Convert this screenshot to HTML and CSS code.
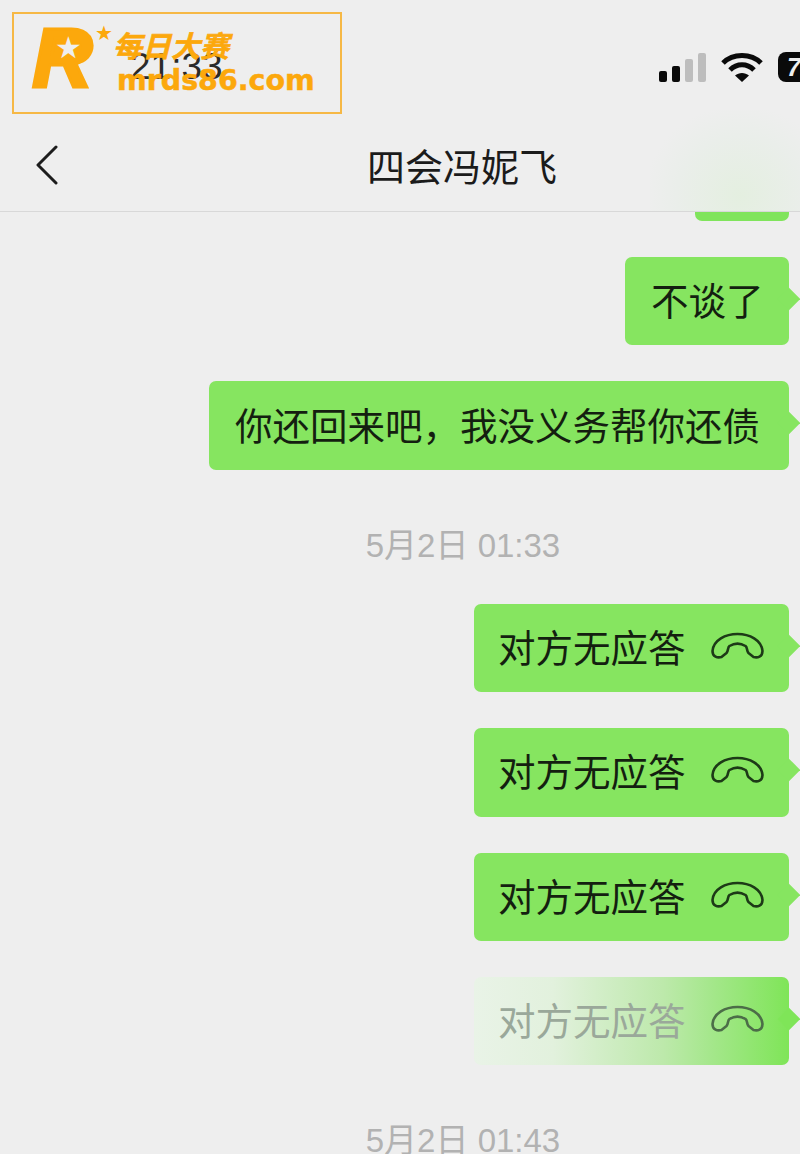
FILE: index.html
```html
<!DOCTYPE html>
<html>

<head>
    <title>chat</title>
    <link rel="stylesheet" href="styles.css">
</head>

<body>
    <div class="screen">
        <div class="status-bar">
            <span class="clock">21:33</span>
            <div class="status-icons">
                <div class="signal">
                    <i class="on s1"></i><i class="on s2"></i><i class="s3"></i><i class="s4"></i>
                </div>
                <svg class="wifi" viewBox="0 0 42 30">
                    <path d="M2 11C12 1 30 1 40 11" />
                    <path d="M9 18C16 11 26 11 33 18" />
                    <path class="wifi-dot" d="M14 23.5C18 20 24 20 28 23.5L21 30Z" />
                </svg>
                <div class="battery">7</div>
            </div>
        </div>

        <div class="nav">
            <svg class="back" viewBox="0 0 22 40">
                <path d="M20 2L2 20L20 38" />
            </svg>
            <div class="nav-title">四会冯妮飞</div>
        </div>

        <div class="chat">
            <div class="bubble bubble-cut"></div>
            <div class="bubble">不谈了</div>
            <div class="bubble bubble-long">你还回来吧，我没义务帮你还债</div>

            <div class="time">5月2日 01:33</div>

            <div class="bubble bubble-call">对方无应答
                <svg class="phone" viewBox="0 0 54 27">
                    <path d="M2 19C3 8 15 2 27 2C39 2 51 8 52 19C52 25 47 26 43 25L38 21C36 19 37 15 35 14C30 11 24 11 19 14C17 15 18 19 16 21L11 25C7 26 2 25 2 19Z" />
                </svg>
            </div>
            <div class="bubble bubble-call">对方无应答
                <svg class="phone" viewBox="0 0 54 27">
                    <path d="M2 19C3 8 15 2 27 2C39 2 51 8 52 19C52 25 47 26 43 25L38 21C36 19 37 15 35 14C30 11 24 11 19 14C17 15 18 19 16 21L11 25C7 26 2 25 2 19Z" />
                </svg>
            </div>
            <div class="bubble bubble-call">对方无应答
                <svg class="phone" viewBox="0 0 54 27">
                    <path d="M2 19C3 8 15 2 27 2C39 2 51 8 52 19C52 25 47 26 43 25L38 21C36 19 37 15 35 14C30 11 24 11 19 14C17 15 18 19 16 21L11 25C7 26 2 25 2 19Z" />
                </svg>
            </div>
            <div class="bubble bubble-call bubble-faded"><span class="faded-text">对方无应答</span>
                <svg class="phone" viewBox="0 0 54 27">
                    <path d="M2 19C3 8 15 2 27 2C39 2 51 8 52 19C52 25 47 26 43 25L38 21C36 19 37 15 35 14C30 11 24 11 19 14C17 15 18 19 16 21L11 25C7 26 2 25 2 19Z" />
                </svg>
            </div>

            <div class="time time-last">5月2日 01:43</div>
        </div>

        <div class="smudge"></div>

        <div class="watermark">
            <div class="logo">
                <span class="logo-fill"></span>
                <span class="logo-r">R</span>
                <span class="logo-inner-star">★</span>
                <span class="logo-star">★</span>
            </div>
            <div class="logo-text">
                <div class="logo-cn">每日大赛</div>
                <div class="logo-url">mrds86.com</div>
            </div>
        </div>
    </div>
</body>

</html>
```

FILE: styles.css
```css
html, body {
    margin: 0;
    padding: 0;
}

body {
    font-family: "Liberation Sans", "Noto Sans CJK SC", sans-serif;
    background-color: #eeeeee;
}

.screen {
    position: relative;
    width: 800px;
    height: 1154px;
    overflow: hidden;
    background-color: #eeeeee;
}

/* status bar */
.status-bar {
    box-sizing: border-box;
    height: 122px;
    padding: 12px 0 0 130px;
    display: flex;
    align-items: center;
    justify-content: space-between;
}

.clock {
    font-size: 37px;
    color: #2a2a2a;
}

.status-icons {
    display: flex;
    align-items: center;
    margin-right: -18px;
}

.signal {
    display: flex;
    align-items: flex-end;
    gap: 5px;
    height: 29px;
    margin-right: 15px;
}

.signal i {
    width: 8px;
    border-radius: 2px;
    background-color: #bdbdbd;
}

.signal i.on {
    background-color: #0a0a0a;
}

.s1 { height: 11px; }
.s2 { height: 16px; }
.s3 { height: 23px; }
.s4 { height: 29px; }

.wifi {
    width: 42px;
    height: 30px;
    margin-right: 15px;
}

.wifi path {
    fill: none;
    stroke: #0a0a0a;
    stroke-width: 5;
}

.wifi .wifi-dot {
    fill: #0a0a0a;
    stroke: none;
}

.battery {
    width: 40px;
    height: 30px;
    line-height: 30px;
    border-radius: 8px;
    background-color: #0a0a0a;
    color: #eee;
    font-size: 25px;
    font-weight: bold;
    font-style: italic;
    padding-left: 9px;
    box-sizing: border-box;
}

/* nav */
.nav {
    height: 89px;
    display: flex;
    align-items: center;
    padding-left: 35px;
    border-bottom: 1px solid #d8d8d8;
}

.back {
    width: 24px;
    height: 40px;
    margin-bottom: 3px;
}

.back path {
    fill: none;
    stroke: #1c1c1c;
    stroke-width: 3;
    stroke-linecap: round;
    stroke-linejoin: round;
}

.nav-title {
    margin-left: 308px;
    padding-bottom: 4px;
    font-size: 38px;
    color: #1b1b1b;
}

/* chat */
.chat {
    display: flex;
    flex-direction: column;
    align-items: flex-end;
    padding-right: 11px;
}

.bubble {
    position: relative;
    display: flex;
    align-items: center;
    height: 88.4px;
    padding: 0 25.5px 5px 26px;
    margin-bottom: 36px;
    box-sizing: border-box;
    background-color: #86e560;
    border-radius: 7px;
    font-size: 37.5px;
    color: #141f10;
    white-space: nowrap;
}

.bubble::after {
    content: "";
    position: absolute;
    right: -8px;
    top: 34px;
    width: 16px;
    height: 16px;
    transform: rotate(45deg);
    background-color: #86e560;
}

.bubble-long {
    padding-right: 29px;
}

.bubble-call {
    padding-left: 24px;
    padding-right: 24px;
}

.bubble-cut {
    width: 94px;
    height: 9px;
    padding: 0;
    border-radius: 0 0 7px 7px;
    background-color: #80e45c;
}

.bubble-cut::after {
    display: none;
}

.bubble-faded {
    margin-bottom: 0;
    background: linear-gradient(90deg, #e9f3e7 0%, #e2f1dd 25%, #bde9ab 60%, #a5e78c 75%, #7fe558 100%);
}

.bubble-faded::after {
    background-color: #7fe558;
}

.faded-text {
    color: #9aa89a;
}

.phone {
    width: 55px;
    height: 27px;
    margin-left: 24.5px;
}

.phone path {
    fill: none;
    stroke: #1d3a17;
    stroke-width: 2.6;
    stroke-linejoin: round;
}

.bubble-faded .phone path {
    stroke: #4c6d48;
}

.time {
    align-self: stretch;
    margin: 20px -11px 38px 126px;
    height: 40px;
    line-height: 40px;
    text-align: center;
    font-size: 33px;
    color: #b2b2b2;
}

.time-last {
    margin-top: 56px;
    margin-bottom: 0;
}

/* blurred patch at top right */
.smudge {
    position: absolute;
    right: 0;
    top: 110px;
    width: 150px;
    height: 101px;
    background: radial-gradient(ellipse at 60% 85%, #e4efe0 0%, #eaeeea 50%, rgba(238, 238, 238, 0) 75%);
}

/* watermark */
.watermark {
    position: absolute;
    left: 12px;
    top: 12px;
    box-sizing: border-box;
    width: 330px;
    height: 102px;
    border: 2px solid #f6b845;
    color: #fca80c;
    display: flex;
}

.logo {
    position: relative;
    width: 98px;
}

.logo-fill {
    position: absolute;
    left: 36px;
    top: 20px;
    width: 36px;
    height: 32px;
    border-radius: 0 14px 14px 0;
    background-color: #fca80c;
}

.logo-r {
    position: absolute;
    left: 18px;
    top: 2px;
    font-size: 84px;
    line-height: 84px;
    font-weight: bold;
    font-style: italic;
    -webkit-text-stroke: 3px #fca80c;
}

.logo-inner-star {
    position: absolute;
    left: 41px;
    top: 18px;
    font-family: "DejaVu Sans", sans-serif;
    font-size: 30px;
    line-height: 32px;
    color: #eeeeee;
}

.logo-star {
    position: absolute;
    left: 81px;
    top: 8px;
    font-family: "DejaVu Sans", sans-serif;
    font-size: 20px;
    line-height: 22px;
}

.logo-text {
    padding: 13px 0 0 3px;
}

.logo-cn {
    margin-left: -2px;
    font-family: "Noto Sans CJK SC", sans-serif;
    font-size: 29px;
    line-height: 34px;
    font-weight: bold;
    font-style: italic;
    -webkit-text-stroke: 0.6px #fca80c;
}

.logo-url {
    margin: 5px 0 0 2px;
    font-family: "DejaVu Sans", sans-serif;
    font-size: 28.5px;
    line-height: 30px;
    font-weight: bold;
    -webkit-text-stroke: 0.5px #fca80c;
}
```
